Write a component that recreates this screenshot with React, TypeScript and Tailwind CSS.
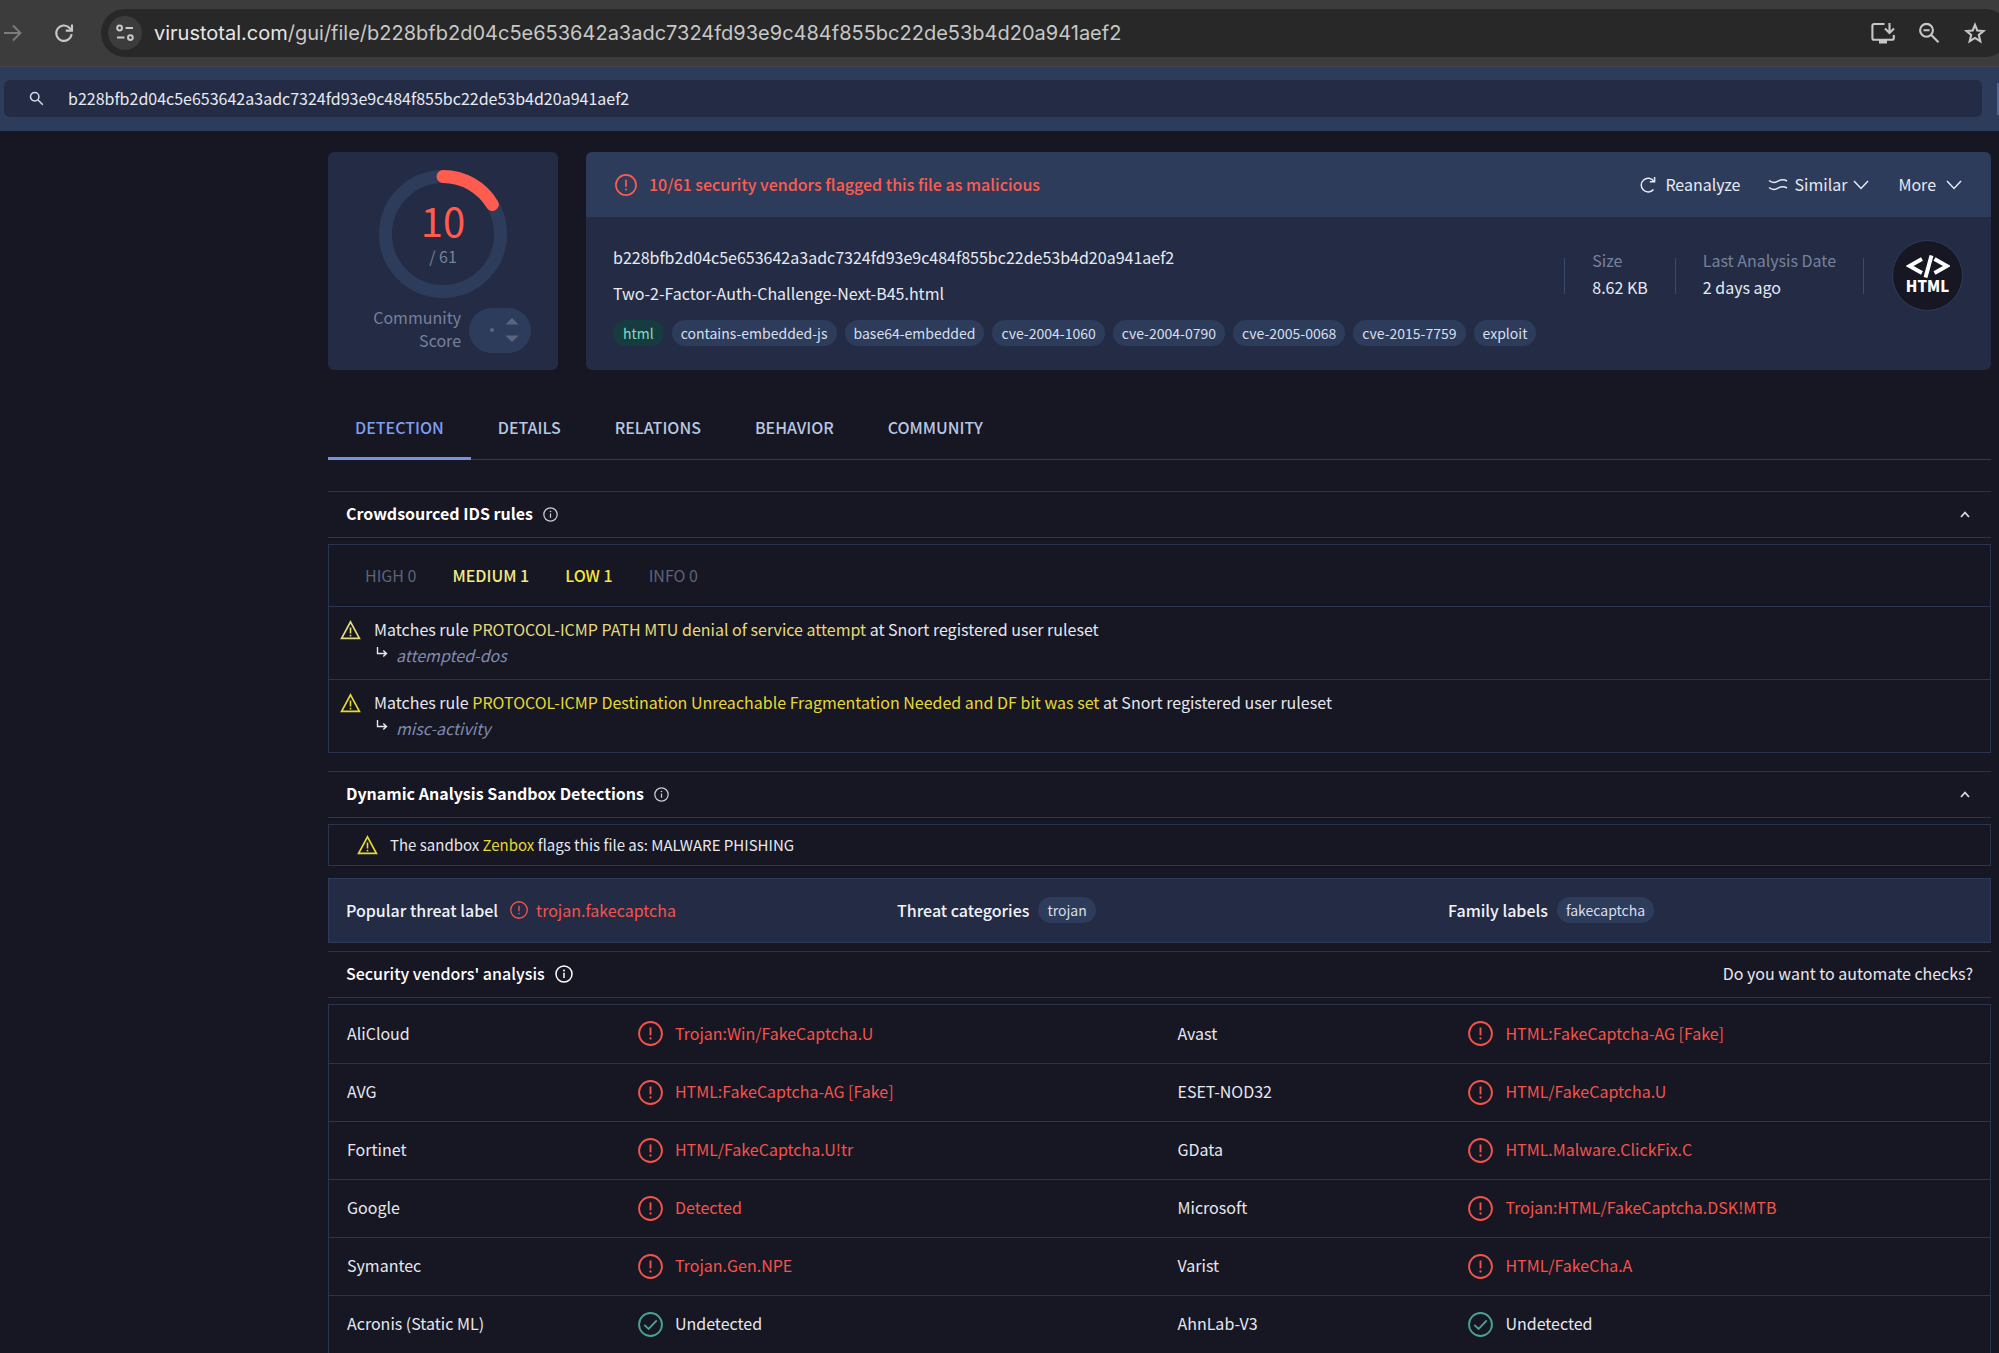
import React from "react";

const HASH = "b228bfb2d04c5e653642a3adc7324fd93e9c484f855bc22de53b4d20a941aef2";

const TAGS = [
  "contains-embedded-js",
  "base64-embedded",
  "cve-2004-1060",
  "cve-2004-0790",
  "cve-2005-0068",
  "cve-2015-7759",
  "exploit",
];

const TABS = ["DETECTION", "DETAILS", "RELATIONS", "BEHAVIOR", "COMMUNITY"];

type Verdict = { vendor: string; result: string; clean?: boolean };

const VERDICTS: [Verdict, Verdict][] = [
  [{ vendor: "AliCloud", result: "Trojan:Win/FakeCaptcha.U" }, { vendor: "Avast", result: "HTML:FakeCaptcha-AG [Fake]" }],
  [{ vendor: "AVG", result: "HTML:FakeCaptcha-AG [Fake]" }, { vendor: "ESET-NOD32", result: "HTML/FakeCaptcha.U" }],
  [{ vendor: "Fortinet", result: "HTML/FakeCaptcha.U!tr" }, { vendor: "GData", result: "HTML.Malware.ClickFix.C" }],
  [{ vendor: "Google", result: "Detected" }, { vendor: "Microsoft", result: "Trojan:HTML/FakeCaptcha.DSK!MTB" }],
  [{ vendor: "Symantec", result: "Trojan.Gen.NPE" }, { vendor: "Varist", result: "HTML/FakeCha.A" }],
  [
    { vendor: "Acronis (Static ML)", result: "Undetected", clean: true },
    { vendor: "AhnLab-V3", result: "Undetected", clean: true },
  ],
];

function AlertIcon({ className }: { className: string }) {
  return (
    <svg viewBox="0 0 24 24" fill="none" stroke="currentColor" className={className} aria-hidden="true">
      <circle cx="12" cy="12" r="11" strokeWidth="1.8" />
      <path d="M12 6.2v7.6" strokeWidth="1.8" />
      <circle cx="12" cy="16.8" r="1.1" fill="currentColor" stroke="none" />
    </svg>
  );
}

function CheckIcon({ className }: { className: string }) {
  return (
    <svg viewBox="0 0 24 24" fill="none" stroke="currentColor" className={className} aria-hidden="true">
      <circle cx="12" cy="12" r="11" strokeWidth="1.8" />
      <path d="M6 12.3l4.2 4L18 8" strokeWidth="1.8" />
    </svg>
  );
}

function InfoIcon({ className }: { className: string }) {
  return (
    <svg viewBox="0 0 18 18" fill="none" stroke="currentColor" className={className} aria-hidden="true">
      <circle cx="9" cy="9" r="8" strokeWidth="1.5" />
      <path d="M9 7.8v5.2" strokeWidth="1.5" />
      <circle cx="9" cy="5.4" r="1" fill="currentColor" stroke="none" />
    </svg>
  );
}

function WarningIcon({ className }: { className: string }) {
  return (
    <svg viewBox="0 0 21 20" fill="none" stroke="currentColor" className={className} aria-hidden="true">
      <path d="M10.5 1.8L19.4 18.4H1.6z" strokeWidth="1.7" />
      <path d="M10.5 7.5v6" strokeWidth="1.6" />
      <path d="M10.5 14.8v1.6" strokeWidth="1.6" />
    </svg>
  );
}

function ChevronDown() {
  return (
    <svg viewBox="0 0 16 16" fill="none" stroke="currentColor" className="size-4" aria-hidden="true">
      <path d="M1 4l7 7.5L15 4" strokeWidth="1.5" />
    </svg>
  );
}

function Chip({ children }: { children: string }) {
  return (
    <a href="#" className="rounded-full bg-[#2d3c5b] px-[9px] text-sm leading-[26px] text-[#d9dfeb]">
      {children}
    </a>
  );
}

function BrowserBar() {
  return (
    <div className="flex h-[67px] items-center overflow-hidden border-b border-[#414649] bg-[#3c3c3c] text-[#c7c7c7]">
      <button aria-label="Forward" className="ml-1 text-[#7c7c7c]">
        <svg viewBox="0 0 18 18" fill="none" stroke="currentColor" strokeWidth="1.9" className="size-[18px]">
          <path d="M0 9h16M9 1.5L16.5 9 9 16.5" />
        </svg>
      </button>
      <button aria-label="Reload" className="ml-8">
        <svg viewBox="0 0 20 20" fill="none" stroke="currentColor" strokeWidth="2.1" className="size-5">
          <path d="M17.6 11.2A7.7 7.7 0 1 1 15.4 4.7L17.4 7" />
          <path d="M18 1.5V7.6H11.8" />
        </svg>
      </button>
      <div className="-mr-2.5 ml-[27px] flex h-12 min-w-0 flex-1 items-center rounded-full bg-[#282828] pl-[7px] pr-[22px]">
        <button aria-label="View site information" className="flex size-[34px] items-center justify-center rounded-full bg-[#3c3c3c]">
          <svg viewBox="0 0 18 18" fill="none" stroke="currentColor" strokeWidth="2" className="size-[18px]">
            <circle cx="3.6" cy="4" r="2.4" />
            <path d="M9.5 4H17M1 13.6h7.5" />
            <circle cx="14.4" cy="13.6" r="2.4" />
          </svg>
        </button>
        <div className="ml-3 flex-1 font-['Inter',sans-serif] text-xl leading-6 whitespace-nowrap">
          <span className="text-[#e6e6e6]">virustotal.com</span>/gui/file/{HASH}
        </div>
        <div className="flex items-center gap-[23px]">
          <button aria-label="Install app">
            <svg viewBox="0 0 24 24" fill="none" stroke="currentColor" strokeWidth="2.1" className="size-6">
              <path d="M13.5 3H3.2A1.8 1.8 0 0 0 1.4 4.8V17a1.8 1.8 0 0 0 1.8 1.8H21a1.8 1.8 0 0 0 1.8-1.8v-3" />
              <path d="M18.5 2v9M14 7.5l4.5 4.5L23 7.5" />
              <path d="M8 19h8v3.5H8z" fill="currentColor" stroke="none" />
            </svg>
          </button>
          <button aria-label="Zoom">
            <svg viewBox="0 0 22 22" fill="none" stroke="currentColor" strokeWidth="2.1" className="size-[22px]">
              <circle cx="8.5" cy="8.3" r="6.4" />
              <path d="M5.5 8.3h6M13.3 13l7.2 7.3" />
            </svg>
          </button>
          <button aria-label="Bookmark">
            <svg viewBox="0 0 24 24" fill="none" stroke="currentColor" strokeWidth="2.1" className="size-6">
              <path d="M12 3.8l2.3 5.7 6.2.5-4.700 4 1.500 6.200L12 16.900l-5.300 3.300 1.500-6.200-4.700-4 6.200-.5z" />
            </svg>
          </button>
        </div>
      </div>
    </div>
  );
}

function SearchBar() {
  return (
    <div className="flex h-16 items-center bg-[#2d3c5b] pb-px pl-1">
      <label className="flex h-[37px] flex-1 items-center rounded-md bg-[#242b44] pl-[25px]">
        <svg viewBox="0 0 15 15" fill="none" stroke="#d3dae8" strokeWidth="1.5" className="size-[15px]" aria-label="Search">
          <circle cx="5.7" cy="5.7" r="4.2" />
          <path d="M8.8 8.8l5 5" />
        </svg>
        <input
          defaultValue={HASH}
          aria-label="Search"
          className="ml-6 flex-1 bg-transparent pb-0.5 text-base leading-6 text-[#e6eaf2] outline-none"
        />
      </label>
      <div className="ml-[15px] h-8 w-0.5 bg-[#53668f]" />
    </div>
  );
}

function ScoreCard() {
  const radius = 57.5;
  const length = 2 * Math.PI * radius;
  return (
    <div className="flex w-[230px] shrink-0 flex-col items-center rounded-md bg-[#242b44] pt-[18px]">
      <div className="grid size-32 place-items-center">
        <svg viewBox="0 0 128 128" fill="none" strokeWidth="13" className="col-start-1 row-start-1 size-32" aria-hidden="true">
          <circle cx="64" cy="64" r={radius} stroke="#2d3c5b" />
          <circle
            cx="64"
            cy="64"
            r={radius}
            stroke="#ff5c50"
            strokeLinecap="round"
            strokeDasharray={`${(length * 10) / 61} ${length}`}
            transform="rotate(-90 64 64)"
          />
        </svg>
        <div className="col-start-1 row-start-1 pb-1 text-center">
          <div className="text-[40px] leading-[48px] text-[#ff5c50]">10</div>
          <div className="text-base leading-6 text-[#76829d]">/ 61</div>
        </div>
      </div>
      <div className="mt-2 flex items-center gap-2 pl-3.5">
        <div className="w-[92px] pb-0.5 text-right text-base leading-[23px] text-[#76829d]">Community Score</div>
        <div className="flex h-[45px] w-[62px] items-center justify-end gap-[11px] rounded-full bg-[#2d3c5b] pr-3 text-[#5b667c]">
          <div className="size-1 rounded-full bg-current" />
          <svg viewBox="0 0 14 26" fill="currentColor" className="h-[26px] w-3.5" aria-hidden="true">
            <path d="M7 1l6.5 6.5H.5zM7 25l6.5-6.5H.5z" />
          </svg>
        </div>
      </div>
    </div>
  );
}

function FileCard() {
  return (
    <div className="min-w-0 flex-1 overflow-hidden rounded-md bg-[#242b44]">
      <div className="flex h-[65px] items-center justify-between bg-[#2d3c5b] px-[29px] text-base text-[#e6eaf2]">
        <div className="flex items-center gap-3 font-medium text-[#ff5c50]">
          <AlertIcon className="size-[22px]" />
          <span className="pb-0.5">10/61 security vendors flagged this file as malicious</span>
        </div>
        <div className="flex items-center">
          <button className="flex items-center gap-2">
            <svg viewBox="0 0 18 18" fill="none" stroke="currentColor" strokeWidth="1.5" className="size-[18px]" aria-hidden="true">
              <path d="M14.5 13.5A6.9 6.9 0 1 1 14.7 5" />
              <path d="M15.6 1v4.800h-4.800" />
            </svg>
            <span className="pb-0.5">Reanalyze</span>
          </button>
          <button className="ml-7 flex items-center gap-1.5">
            <svg viewBox="0 0 20 16" fill="none" stroke="currentColor" strokeWidth="1.5" className="h-4 w-5" aria-hidden="true">
              <path d="M1 3.500C4 6 6.500 6 9.500 4.300S15.500 1.800 19 4M1 10.500C4 13 6.500 13 9.500 11.300S15.500 8.800 19 11" />
            </svg>
            <span className="pb-0.5">Similar</span>
            <ChevronDown />
          </button>
          <button className="ml-[29px] flex items-center gap-2.5">
            <span className="pb-0.5">More</span>
            <ChevronDown />
          </button>
        </div>
      </div>
      <div className="flex items-start justify-between pt-[22px] pr-7 pb-6 pl-[27px]">
        <div className="text-base text-[#e6eaf2]">
          <div className="leading-9">{HASH}</div>
          <div className="leading-9">Two-2-Factor-Auth-Challenge-Next-B45.html</div>
          <div className="mt-[9px] flex flex-wrap gap-2">
            <a href="#" className="rounded-full bg-[#173c40] px-2.5 text-sm leading-[26px] text-[#7fdccb]">
              html
            </a>
            {TAGS.map((tag) => (
              <Chip key={tag}>{tag}</Chip>
            ))}
          </div>
        </div>
        <div className="flex items-center pt-px text-base leading-[27px] whitespace-nowrap text-[#e6eaf2]">
          <div className="h-9 w-px bg-[#3a4b6e]" />
          <div className="px-[27px] pb-[3px]">
            <div className="text-[#76829d]">Size</div>
            <div>8.62 KB</div>
          </div>
          <div className="h-9 w-px bg-[#3a4b6e]" />
          <div className="px-[27px] pb-[3px]">
            <div className="text-[#76829d]">Last Analysis Date</div>
            <div>2 days ago</div>
          </div>
          <div className="h-9 w-px bg-[#3a4b6e]" />
          <div className="ml-7 flex size-[71px] flex-col items-center justify-center rounded-full border border-[#2d3c5b] bg-[#171623] text-white">
            <svg viewBox="0 0 44 23" fill="none" stroke="currentColor" strokeWidth="4" className="h-[23px] w-11" aria-hidden="true">
              <path d="M16 4L3.500 11 16 18M28.500 4L41 11l-12.500 7M25.500.5l-6 22" />
            </svg>
            <div className="pb-0.5 text-[15px] leading-4 font-black">HTML</div>
          </div>
        </div>
      </div>
    </div>
  );
}

type SectionHeaderProps = { title: string; children: React.ReactNode; titleClass: string; iconClass: string };

function SectionHeader({ title, children, titleClass, iconClass }: SectionHeaderProps) {
  return (
    <div className="flex h-[47px] items-center border-y border-[#2a3450] px-[18px] pb-px text-base text-white">
      <h2 className={titleClass}>{title}</h2>
      <button aria-label={`About ${title}`} className="ml-2.5">
        <InfoIcon className={iconClass} />
      </button>
      <div className="ml-auto flex">{children}</div>
    </div>
  );
}

function Collapse() {
  return (
    <button aria-label="Collapse section">
      <svg viewBox="0 0 16 10" fill="none" stroke="#d5d9e2" strokeWidth="1.8" className="h-2.5 w-4">
        <path d="M4 8l4-4.500L12 8" />
      </svg>
    </button>
  );
}

function IdsRule({ rule, kind, className }: { rule: string; kind: string; className: string }) {
  return (
    <li className="flex h-[73px] gap-[13px] border-t border-[#2a3450] px-[11px] pt-2.5">
      <WarningIcon className={`mt-[3px] h-5 w-[21px] shrink-0 ${className}`} />
      <div className="text-base text-[#e6e8ee]">
        <div className="leading-6">
          Matches rule{" "}
          <a href="#" className={className}>
            {rule}
          </a>{" "}
          at Snort registered user ruleset
        </div>
        <div className="flex gap-2 pl-0.5 leading-7">
          <svg viewBox="0 0 12 12" fill="none" stroke="currentColor" strokeWidth="1.4" className="mt-[5px] size-3" aria-hidden="true">
            <path d="M1.500 1v6.500H10M7.300 4.500L10.500 7.500 7.300 10.500" />
          </svg>
          <span className="text-[#7f8cad] italic">{kind}</span>
        </div>
      </div>
    </li>
  );
}

function VerdictCells({ verdict }: { verdict: Verdict }) {
  return (
    <>
      <th scope="row" className="w-[18.6%] pb-0.5 pl-[18px] text-left font-normal">
        {verdict.vendor}
      </th>
      <td className="w-[31.4%]">
        <div className={verdict.clean ? "flex items-center gap-3" : "flex items-center gap-3 text-[#f4534b]"}>
          {verdict.clean ? <CheckIcon className="size-[25px] text-[#46a393]" /> : <AlertIcon className="size-[25px]" />}
          <span className="pb-0.5">{verdict.result}</span>
        </div>
      </td>
    </>
  );
}

export default function App() {
  return (
    <div className="h-screen overflow-hidden bg-[#171623] font-['Noto_Sans_CJK_SC',sans-serif]">
      <BrowserBar />
      <SearchBar />
      <main className="pt-[21px] pr-2 pl-[328px]">
        <section className="flex h-[218px] gap-7">
          <ScoreCard />
          <FileCard />
        </section>

        <nav className="mt-7 flex h-[62px] border-b border-[#2d3c5b] text-base font-medium text-[#b9c7e0]">
          {TABS.map((tab, i) => (
            <a
              key={tab}
              href="#"
              className={
                i === 0
                  ? "-mb-px border-b-[3px] border-[#7693dd] px-[27px] leading-[58px] text-[#7f9ff0]"
                  : "px-[27px] leading-[58px]"
              }
            >
              {tab}
            </a>
          ))}
        </nav>

        <section className="mt-[31px]">
          <SectionHeader title="Crowdsourced IDS rules" titleClass="pb-0.5 font-bold" iconClass="size-[15px] text-[#c9cdd6]">
            <Collapse />
          </SectionHeader>
          <div className="mt-1.5 border border-[#2a3450]">
            <div className="flex h-[61px] items-center gap-9 px-9 pb-0.5 text-base text-[#5c6478]">
              <span>HIGH 0</span>
              <span className="font-medium text-[#f3ea86]">MEDIUM 1</span>
              <span className="font-medium text-[#f5e63c]">LOW 1</span>
              <span>INFO 0</span>
            </div>
            <ul>
              <IdsRule
                rule="PROTOCOL-ICMP PATH MTU denial of service attempt"
                kind="attempted-dos"
                className="text-[#e4dc7c]"
              />
              <IdsRule
                rule="PROTOCOL-ICMP Destination Unreachable Fragmentation Needed and DF bit was set"
                kind="misc-activity"
                className="text-[#e6d935]"
              />
            </ul>
          </div>
        </section>

        <section className="mt-[18px]">
          <SectionHeader
            title="Dynamic Analysis Sandbox Detections"
            titleClass="pb-0.5 font-bold"
            iconClass="size-[15px] text-[#c9cdd6]"
          >
            <Collapse />
          </SectionHeader>
          <div className="mt-1.5 flex h-[42px] items-center gap-3 border border-[#2a3450] px-7 text-[15px] text-[#e6e8ee]">
            <WarningIcon className="h-5 w-[21px] text-[#e6d935]" />
            <p>
              The sandbox{" "}
              <a href="#" className="text-[#e6d935]">
                Zenbox
              </a>{" "}
              flags this file as: MALWARE PHISHING
            </p>
          </div>
        </section>

        <section className="mt-3 grid h-[65px] grid-cols-3 gap-[26px] border border-[#2d3c5b] bg-[#242b44] px-[17px] pb-0.5 text-base text-[#f1f3f8]">
          <div className="flex items-center">
            <span className="font-medium">Popular threat label</span>
            <AlertIcon className="mr-2 ml-3 size-[18px] text-[#f4534b]" />
            <span className="text-[#f4534b]">trojan.fakecaptcha</span>
          </div>
          <div className="flex items-center gap-[9px]">
            <span className="font-medium">Threat categories</span>
            <Chip>trojan</Chip>
          </div>
          <div className="flex items-center gap-[9px]">
            <span className="font-medium">Family labels</span>
            <Chip>fakecaptcha</Chip>
          </div>
        </section>

        <section className="mt-2">
          <SectionHeader title="Security vendors' analysis" titleClass="pb-0.5 font-medium" iconClass="size-[18px]">
            <a href="#" className="pb-0.5 text-[#e6e8ee]">
              Do you want to automate checks?
            </a>
          </SectionHeader>
          <div className="mt-1.5 border border-[#2a3450]">
            <table className="w-full table-fixed text-base text-[#e6e8ee]">
              <tbody>
                {VERDICTS.map((pair) => (
                  <tr key={pair[0].vendor} className="h-[58px] border-b border-[#2a3450]">
                    <VerdictCells verdict={pair[0]} />
                    <VerdictCells verdict={pair[1]} />
                  </tr>
                ))}
              </tbody>
            </table>
          </div>
        </section>
      </main>
    </div>
  );
}
